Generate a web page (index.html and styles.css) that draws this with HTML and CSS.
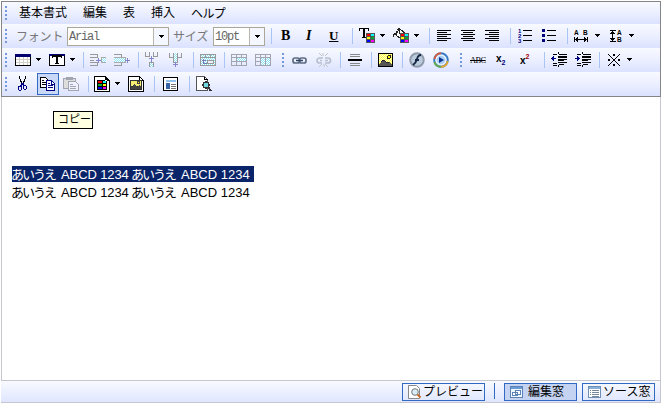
FILE: index.html
```html
<!DOCTYPE html>
<html lang="ja">
<head>
<meta charset="utf-8">
<title>エディタ</title>
<link rel="stylesheet" href="styles.css">
</head>
<body>
<svg class="defs" width="0" height="0">
  <defs>
    <pattern id="dots" width="2" height="2" patternUnits="userSpaceOnUse"><path fill="#fff" d="M0 0h2v2H0z"/><path fill="#8ce4f4" d="M0 0h1v1H0zM1 1h1v1H1z"/></pattern>
    <pattern id="sun" width="2" height="2" patternUnits="userSpaceOnUse"><path fill="#ffffc0" d="M0 0h2v2H0z"/><path fill="#ffff50" d="M0 0h1v1H0zM1 1h1v1H1z"/></pattern>
    <g id="palette"><path fill="#555" d="M0 0h9v10H0z"/><path fill="#f00" d="M1 1h3v2H1z"/><path fill="#0ff" d="M5 1h3v2H5z"/><path fill="#ff0" d="M1 4h3v2H1z"/><path fill="#0a3" d="M5 4h3v2H5z"/><path fill="#00f" d="M1 7h3v2H1z"/><path fill="#f0f" d="M5 7h3v2H5z"/></g>
    <g id="arr"><path d="M0 0h5v1H0zM1 1h3v1H1zM2 2h1v1H2z"/></g>
    <g id="lens"><circle cx="10" cy="9" r="3" fill="#70d8df" stroke="#333" stroke-width="1.3"/><path d="M12 11l3 4" stroke="#333" stroke-width="2"/></g>
  </defs>
</svg>
<div class="editor">
  <div class="toolbars">
    <div class="row menu">
      <i class="grip"></i><span>基本書式</span><span>編集</span><span>表</span><span>挿入</span><span class="help">ヘルプ</span>
    </div>
    <div class="row format">
      <i class="grip"></i>
      <span class="label">フォント</span>
      <div class="select wide"><span>Arial</span><b><svg width="5" height="3"><use href="#arr"/></svg></b></div>
      <span class="label">サイズ</span>
      <div class="select"><span class="pt">10pt</span><b><svg width="5" height="3"><use href="#arr"/></svg></b></div>
      <i class="sep"></i>
      <span class="glyph bold">B</span><span class="glyph italic">I</span><span class="glyph under">U</span>
      <i class="sep"></i>
      <svg width="17" height="16"><path d="M0 0h10v3H9V1H6v8h1v1H3V9h1V1H1v2H0z"/><use href="#palette" x="7" y="5"/></svg>
      <svg class="arrow" width="5" height="3"><use href="#arr"/></svg>
      <svg width="17" height="16"><path d="M5 3l2-2 6 5-5 5-5-4z" fill="#fff" stroke="#222"/><path d="M5 0h2v6H6V2H4zM3 3h2v2H3zM1 5h2v2H1zM0 6h1v3H0z" fill="#222"/><use href="#palette" x="7" y="5"/></svg>
      <svg class="arrow" width="5" height="3"><use href="#arr"/></svg>
      <i class="sep"></i>
      <svg width="16" height="16"><path d="M0 2h14v1H0zM0 4h10v1H0zM0 6h14v1H0zM0 8h10v1H0zM0 10h14v1H0zM0 12h10v1H0z"/></svg>
      <svg width="16" height="16"><path d="M0 2h14v1H0zM2 4h10v1H2zM0 6h14v1H0zM2 8h10v1H2zM0 10h14v1H0zM2 12h10v1H2z"/></svg>
      <svg width="16" height="16"><path d="M0 2h14v1H0zM4 4h10v1H4zM0 6h14v1H0zM4 8h10v1H4zM0 10h14v1H0zM4 12h10v1H4z"/></svg>
      <i class="sep"></i>
      <svg width="16" height="16"><path d="M5 2h9v1H5zM5 7h9v1H5zM5 12h9v1H5z"/><g class="tiny navy"><text x="0" y="5">1</text><text x="0" y="10">2</text><text x="0" y="15">3</text></g></svg>
      <svg width="16" height="16"><path fill="#000080" d="M0 1h3v3H0zM0 6h3v3H0zM0 11h3v3H0z"/><path d="M5 2h9v1H5zM5 7h9v1H5zM5 12h9v1H5z"/></svg>
      <i class="sep"></i>
      <svg width="17" height="16"><g class="tiny"><text x="0" y="7">A</text><text x="9" y="7">B</text></g><path d="M0 9h1v5H0zM13 9h1v5h-1zM0 11h14v1H0zM2 10h1v3H2zM3 9h1v5H3zM10 9h1v5h-1zM11 10h1v3h-1z"/></svg>
      <svg class="arrow" width="5" height="3"><use href="#arr"/></svg>
      <svg width="17" height="16"><g class="tiny"><text x="8" y="7">A</text><text x="8" y="14">B</text></g><path d="M1 2h6v1H1zM1 13h6v1H1zM3 3h1v10H3zM2 4h3v1H2zM1 5h5v1H1zM1 10h5v1H1zM2 11h3v1H2z"/></svg>
      <svg class="arrow" width="5" height="3"><use href="#arr"/></svg>
    </div>
    <div class="row insert">
      <i class="grip"></i>
      <svg width="17" height="16"><path d="M0 2h16v12H0z"/><path fill="#000070" d="M0 2h16v3H0z"/><path fill="#fff" d="M1 5h14v8H1z"/><path fill="#d0d0c8" d="M1 7h14v1H1zM1 10h14v1H1zM4 5h1v8H4zM8 5h1v8H8zM12 5h1v8h-1z"/></svg>
      <svg class="arrow" width="5" height="3"><use href="#arr"/></svg>
      <svg width="17" height="16"><path d="M0 2h16v12H0z"/><path fill="#000070" d="M0 2h16v2H0z"/><path fill="#fff" d="M1 4h14v9H1z"/><path d="M3 3h10v3h-1V5H9v6h1v1H6v-1h1V5H4v1H3z"/></svg>
      <svg class="arrow" width="5" height="3"><use href="#arr"/></svg>
      <i class="sep"></i>
      <svg width="18" height="16" class="off"><path d="M1 2.500h7.500v3H1M1 10.500h7.500v3H1M1 8h4" stroke="#999"/><path d="M12 6h5v4h-5z" fill="url(#dots)" stroke="none"/><path d="M17 5.500h-4.500v5H17" stroke="#aaa"/><path d="M7 8.500h5M9.500 6v5" stroke="#8585ce"/></svg>
      <svg width="18" height="16" class="off"><path d="M1 2.500h7.500v3M1 13.500h7.500v-3" stroke="#999"/><path d="M1 5.500h11.500v5H1" fill="url(#dots)" stroke="#aaa"/><path d="M12 8.500h5M14.500 6v5" stroke="#8585ce"/></svg>
      <i class="sep"></i>
      <svg width="17" height="16" class="off"><path d="M1.500 0v4.500h4V0M9.500 0v4.500h4V0" stroke="#999"/><path d="M5.500 15v-5h4v5" fill="url(#dots)" stroke="#999"/><path d="M7.500 4v6M5 6.500h5" stroke="#8585ce"/></svg>
      <svg width="17" height="16" class="off"><path d="M1.500 1v4.500h4M13.500 1v4.500h-4" stroke="#999"/><path d="M5.500 1v9h4V1" fill="url(#dots)" stroke="#999"/><path d="M7.500 10v5M5 12.500h5" stroke="#8585ce"/></svg>
      <i class="sep"></i>
      <svg width="17" height="16" class="off"><path d="M.5 2.500h15v11H.5z" fill="url(#dots)" stroke="#999"/><path d="M1 5.500h14M5.500 3v3M10.500 3v3" stroke="#999"/><path d="M7.500 8.500h6v3h-6z" fill="#eef" stroke="#999"/><path d="M7 11.500H3.500V7M2 8.500h4" stroke="#7777b8"/></svg>
      <i class="sep"></i>
      <svg width="17" height="16" class="off"><path d="M.5 2.500h15v11H.5z"/><path d="M5 6h10v4H5z" fill="url(#dots)" stroke="none"/><path d="M.5 5.500h15M.5 9.500h15M5.500 3v10M10.500 3v3M10.500 10v3"/></svg>
      <svg width="17" height="16" class="off"><path d="M.5 2.500h15v11H.5z"/><path d="M5 6h10v7H5z" fill="url(#dots)" stroke="none"/><path d="M.5 5.500h15M.5 9.500h5M5.500 3v10M10.500 3v10"/></svg>
      <i class="grip"></i>
      <svg width="16" height="16" class="smooth"><g fill="none" stroke="#5d6c84" stroke-width="1.700"><rect x="1" y="6" width="6.500" height="5" rx="2"/><rect x="7.500" y="6" width="6.500" height="5" rx="2"/></g><path d="M4 8.500h7" stroke="#35445e" stroke-width="1.500"/></svg>
      <svg width="16" height="16" class="smooth"><g fill="none" stroke="#b9bfd0" stroke-width="1.700"><path d="M7 6H3.500a2.500 2.500 0 000 5H6M9 6h3a2.500 2.500 0 010 5H9M4 8.500h2M9 8.500h3"/></g><path d="M3 1l3 3M7 1v3M12 1L9 4M3 15l3-3M8 12v3M12 15l-3-3" stroke="#c2c5cc"/></svg>
      <i class="sep"></i>
      <svg width="16" height="16"><path fill="#888" d="M3 2h10v1H3zM3 4h10v1H3zM3 11h10v1H3zM3 13h10v1H3z"/><path d="M1 7h14v2H1z"/></svg>
      <i class="sep"></i>
      <svg width="16" height="16"><path d="M0 1h15v14H0z"/><path fill="url(#sun)" d="M1 2h13v12H1z"/><circle cx="11" cy="5" r="1.500" fill="#ff0" stroke="#222"/><path fill="#555" d="M1 14v-2l3-3 1-1 2 1 2 2 2-1 3 3v1z"/><path fill="#222" d="M4 8h3v1H4zM3 9h1v1H3zM7 9h1v1H7zM8 10h3v1H8z"/></svg>
      <i class="sep"></i>
      <svg width="17" height="16" class="smooth"><circle cx="8" cy="8" r="7" fill="#8398b2" stroke="#929aa8" stroke-width="1.500"/><circle cx="8" cy="8" r="5.800" fill="#bccbdb"/><path d="M12 3Q9 3 8 7T4 13M6 8h4" fill="none" stroke="#142644" stroke-width="1.800"/></svg>
      <svg width="17" height="16" class="smooth"><circle cx="8" cy="8" r="6.800" fill="#eef5ff" stroke="#397cc4" stroke-width="2"/><path d="M1.500 7A6.500 6.500 0 018 1.300" stroke="#db5c3c" stroke-width="2" fill="none"/><path d="M14.700 9A6.500 6.500 0 018 14.700" stroke="#e0a62f" stroke-width="2" fill="none"/><path d="M8 14.700A6.500 6.500 0 011.500 10" stroke="#62a951" stroke-width="2" fill="none"/><circle cx="8" cy="8" r="4.300" fill="#adcff6"/><path d="M6 5l5 3-5 3z" fill="#0b3790"/></svg>
      <i class="grip"></i>
      <span class="strike">ABC</span>
      <span class="script">x<sub>2</sub></span>
      <span class="script super"><span>x</span><sup>2</sup></span>
      <i class="sep"></i>
      <svg width="17" height="16"><path d="M2 2h4v1H2zM8 2h8v1H8zM7 4h9v2H7zM7 7h9v1H7zM7 8h6v1H7zM7 10h9v1H7zM2 11h4v1H2zM2 13h4v1H2zM8 12h5v1H8zM7 0h1v2H7zM7 13h1v2H7z"/><path fill="#000080" d="M0 6h5v1H0zM2 4h1v5H2zM1 5h1v3H1z"/></svg>
      <svg width="17" height="16"><path d="M2 2h4v1H2zM8 2h8v1H8zM7 4h9v2H7zM7 7h9v1H7zM7 8h6v1H7zM7 10h9v1H7zM2 11h4v1H2zM2 13h4v1H2zM8 12h5v1H8zM7 0h1v2H7zM7 13h1v2H7z"/><path fill="#000080" d="M0 6h5v1H0zM2 4h1v5H2zM3 5h1v3H3z"/></svg>
      <i class="sep"></i>
      <svg width="17" height="16"><path d="M2 2l12 12M14 2L2 14" stroke="#000"/><path d="M7 2h2v2H7zM7 12h2v2H7zM2 7h2v2H2zM12 7h2v2h-2z"/></svg>
      <svg class="arrow" width="5" height="3"><use href="#arr"/></svg>
    </div>
    <div class="row edit">
      <i class="grip"></i>
      <svg width="17" height="16"><path d="M5 0h1v3H5zM6 3h1v3H6zM7 5h1v3H7zM11 0h1v3h-1zM10 3h1v3h-1zM9 5h1v3H9z"/><path fill="#000080" d="M7 7h3v2H7zM6 9h2v1H6zM9 9h3v1H9zM4 10h3v1H4zM4 11h1v3H4zM7 10h1v4H7zM5 14h2v1H5zM9 10h1v3H9zM12 10h1v3h-1zM10 13h2v1h-2z"/></svg>
      <span class="active"><svg width="16" height="16"><path fill="#fff" stroke="#000" d="M.5 1.500h5l3 3v7h-8z"/><path d="M2 4h2v1H2zM2 6h4v1H2zM2 8h4v1H2z"/><path fill="#fff" stroke="#000080" d="M6.500 4.500h5l3 3v7h-8z"/><path fill="#000080" d="M11 4h1v4h3v1h-4zM8 7h2v1H8zM8 9h5v1H8zM8 11h5v1H8z"/></svg></span>
      <svg width="17" height="16" class="off"><path d="M.5 2.500h12v10H.5zM3.500 1.500h6v2h-6z" fill="#ddd"/><path d="M5.500 5.500h7l3 3v6h-10z" fill="#eef1ff"/><path d="M7 8.500h3M7 10.500h6M7 12.500h6"/></svg>
      <i class="sep"></i>
      <svg width="17" height="16"><path fill="#fff" stroke="#000" d="M.5.5h11l4 4v11H.5z"/><path d="M11 1v4h4M3 4h10v10H3z"/><path fill="#f00" d="M4 5h4v2H4z"/><path fill="#0ff" d="M9 5h3v2H9z"/><path fill="#0a3" d="M4 8h4v2H4z"/><path fill="#ff0" d="M9 8h3v2H9z"/><path fill="#00f" d="M4 11h4v2H4z"/><path fill="#f0f" d="M9 11h3v2H9z"/></svg>
      <svg class="arrow" width="5" height="3"><use href="#arr"/></svg>
      <svg width="17" height="16"><path fill="#fff" stroke="#000" d="M.5.5h11l4 4v11H.5z"/><path d="M11 1h1v3h3v1h-4z"/><path fill="#333" d="M2 4h12v10H2z"/><path fill="#f4ed72" d="M3 5h10v5H3z"/><path fill="#444" d="M3 11l3-3 3 3 2-2 2 2v2H3zM9 5h3v3H9z"/><path fill="#ff0" d="M10 6h1v1h-1z"/></svg>
      <i class="sep"></i>
      <svg width="16" height="16"><path fill="#fff" stroke="#000" d="M.5 1.500h14v13H.5z"/><path fill="#8fc0ee" d="M3 4h10v2H3z"/><path fill="#3865a8" d="M3 7h4v6H3z"/><path fill="#777" d="M8 8h5v1H8zM8 10h5v1H8zM8 12h5v1H8z"/></svg>
      <i class="sep"></i>
      <svg width="17" height="16"><path fill="#fff" stroke="#555" d="M.5.5h8l3 3v11H.5z"/><path d="M8 1h1v2h3v1H8z"/><use href="#lens"/></svg>
    </div>
  </div>
  <div class="page">
    <div class="tip">コピー</div>
    <p class="line chosen"><span class="kana">あいうえ</span><span class="latin">ABCD 1234</span><span class="kana">あいうえ</span><span>ABCD 1234</span></p>
    <p class="line"><span class="kana">あいうえ</span><span class="latin">ABCD 1234</span><span class="kana">あいうえ</span><span>ABCD 1234</span></p>
  </div>
  <div class="status">
    <div class="tab preview"><svg width="16" height="16" class="smooth"><path fill="#fff" stroke="#888" d="M1.500 1.500h8l3 3v10h-11z"/><circle cx="8" cy="8" r="3.300" fill="#d8edf7" stroke="#777"/><path d="M10.500 10.500l3 3" stroke="#c76a28" stroke-width="2"/></svg><span>プレビュー</span></div>
    <i class="divider"></i>
    <div class="tab source on"><svg width="16" height="16"><path fill="#eef6ff" stroke="#5b83b8" d="M1.500 2.500h12v11h-12z"/><path fill="#6c9cd4" d="M2 3h11v2H2z"/><path fill="#fff" stroke="#5b83b8" d="M6.500 6.500h5v4h-5zM3.500 8.500h5v3h-5z"/></svg><span>編集窓</span></div>
    <div class="tab source"><svg width="16" height="16"><path fill="#fff" stroke="#6d8fb8" d="M1.500 2.500h12v11h-12z"/><path fill="#8bb0da" d="M2 3h11v2H2z"/><path fill="#78899d" d="M3 6h1v1H3zM5 6h7v1H5zM3 8h1v1H3zM5 8h7v1H5zM3 10h1v1H3zM5 10h7v1H5zM5 12h7v1H5z"/></svg><span>ソース窓</span></div>
  </div>
</div>
</body>
</html>
```
FILE: styles.css
```css
* { box-sizing: border-box; }
body {
  margin: 0;
  width: 662px;
  height: 404px;
  overflow: hidden;
  background: #fff;
  color: #000;
  font: 12px/16px "Liberation Sans", "Noto Sans CJK JP", sans-serif;
}
.defs { position: absolute; }
svg { display: block; shape-rendering: crispEdges; }
.smooth { shape-rendering: auto; }
.off { fill: none; stroke: #a2a4b0; }
.editor {
  display: flex;
  flex-direction: column;
  width: 660px;
  height: 402px;
  margin: 1px 0 0 1px;
}
.toolbars { border: 1px solid #858585; height: 96px; flex: none; }
.row {
  display: grid;
  align-items: center;
  height: 24px;
  padding-left: 3px;
  white-space: nowrap;
  background: linear-gradient(#f8faff, #ebefff 50%, #dbe2ff);
}
.row > * { justify-self: start; }
.menu { height: 22px; grid-template-columns: 14px 64px 40px 28px 40px 1fr; }
.help { letter-spacing: -0.6px; padding-top: 1px; }
.format { grid-template-columns: 11px 51px 106px 40px 58px 10px 24px 24px 23px 7px 21px 13px 21px 15px 8px 24px 24px 25px 8px 24px 25px 7px 21px 14px 20px 1fr; }
.insert { grid-template-columns: 10px 21px 13px 21px 13px 6px 24px 25px 6px 24px 25px 7px 24px 7px 24px 27px 10px 24px 24px 7px 24px 7px 24px 7px 24px 27px 10px 26px 24px 24px 7px 24px 24px 7px 21px 1fr; }
.edit { grid-template-columns: 9px 23px 26px 25px 6px 21px 13px 26px 9px 26px 7px 1fr; }
.grip {
  width: 2px;
  height: 14px;
  background: repeating-linear-gradient(#7499dc 0 2px, transparent 2px 4px);
}
.sep { width: 1px; height: 16px; background: #a9c5f5; }
.arrow { margin-top: -1px; }
.label { color: #777; letter-spacing: -0.2px; padding-top: 1px; }
.select {
  display: flex;
  width: 52px;
  height: 19px;
  background: #fff;
  border: 1px solid #aca899;
}
.select.wide { width: 102px; }
.select span {
  flex: 1;
  padding: 1px 0 0 1px;
  color: #666;
  font: 12px/17px "Liberation Mono", monospace;
  letter-spacing: -1.2px;
}
.select b {
  display: flex;
  align-items: center;
  justify-content: center;
  width: 15px;
  border-left: 1px solid #b8b5aa;
  background: #f4f7ff;
}
.glyph { font: bold 14px/16px "Liberation Serif", serif; }
.italic { font-style: italic; padding-left: 1px; }
.under { font-size: 13px; text-decoration: underline; }
.tiny { font: bold 6.5px "Liberation Sans", sans-serif; }
.navy { fill: #000080; font-size: 6px; }
.strike { font: 8.5px/16px "Liberation Serif", serif; text-decoration: line-through; letter-spacing: -0.6px; }
.script { display: flex; font: bold 10px/14px "Liberation Sans", sans-serif; margin-top: -3px; }
.super { margin-top: 1px; }
.script sub, .script sup { font-size: 7px; line-height: 10px; }
.script sub { color: #000080; align-self: flex-end; margin-bottom: -2px; }
.script sup { color: #a00000; align-self: flex-start; margin-top: -2px; }
.active {
  display: flex;
  align-items: center;
  justify-content: center;
  width: 22px;
  height: 22px;
  border: 1px solid #316ac5;
  background: #c9d8f7;
}
.page {
  flex: 1;
  border: solid #c6c6cf;
  border-width: 0 1px 1px;
  padding: 14px 10px 0;
}
.tip {
  width: 40px;
  height: 18px;
  margin: 0 0 37px 41px;
  padding-left: 4px;
  border: 1px solid #000;
  background: #ffffe1;
  font-size: 11px;
  line-height: 15px;
}
.line {
  display: flex;
  width: 242px;
  height: 16px;
  margin: 0 0 2px;
  font-size: 13px;
  line-height: 17px;
  white-space: nowrap;
}
.chosen { background: #0a246a; color: #fff; }
.kana { width: 50px; margin-left: -1px; letter-spacing: -2px; flex: none; }
.latin { width: 71px; flex: none; letter-spacing: -0.1px; }
.status {
  display: flex;
  height: 22px;
  padding: 2px 5px 0 0;
  justify-content: flex-end;
  border-right: 1px solid #c6c6cf;
  border-bottom: 1px solid #c6c6cf;
  background: linear-gradient(#f8faff, #dfe6ff);
}
.tab {
  display: flex;
  align-items: center;
  width: 73px;
  height: 18px;
  border: 1px solid #316ac5;
  padding-left: 4px;
  white-space: nowrap;
}
.tab span { margin-left: 0; line-height: 16px; }
.preview { width: 83px; }
.divider { width: 1px; height: 16px; margin: 0 9px 0 9px; background: #316ac5; }
.tab.on { margin-right: 5px; background: #c4d3f2; }
.tab.on span { margin-left: 3px; }
```
